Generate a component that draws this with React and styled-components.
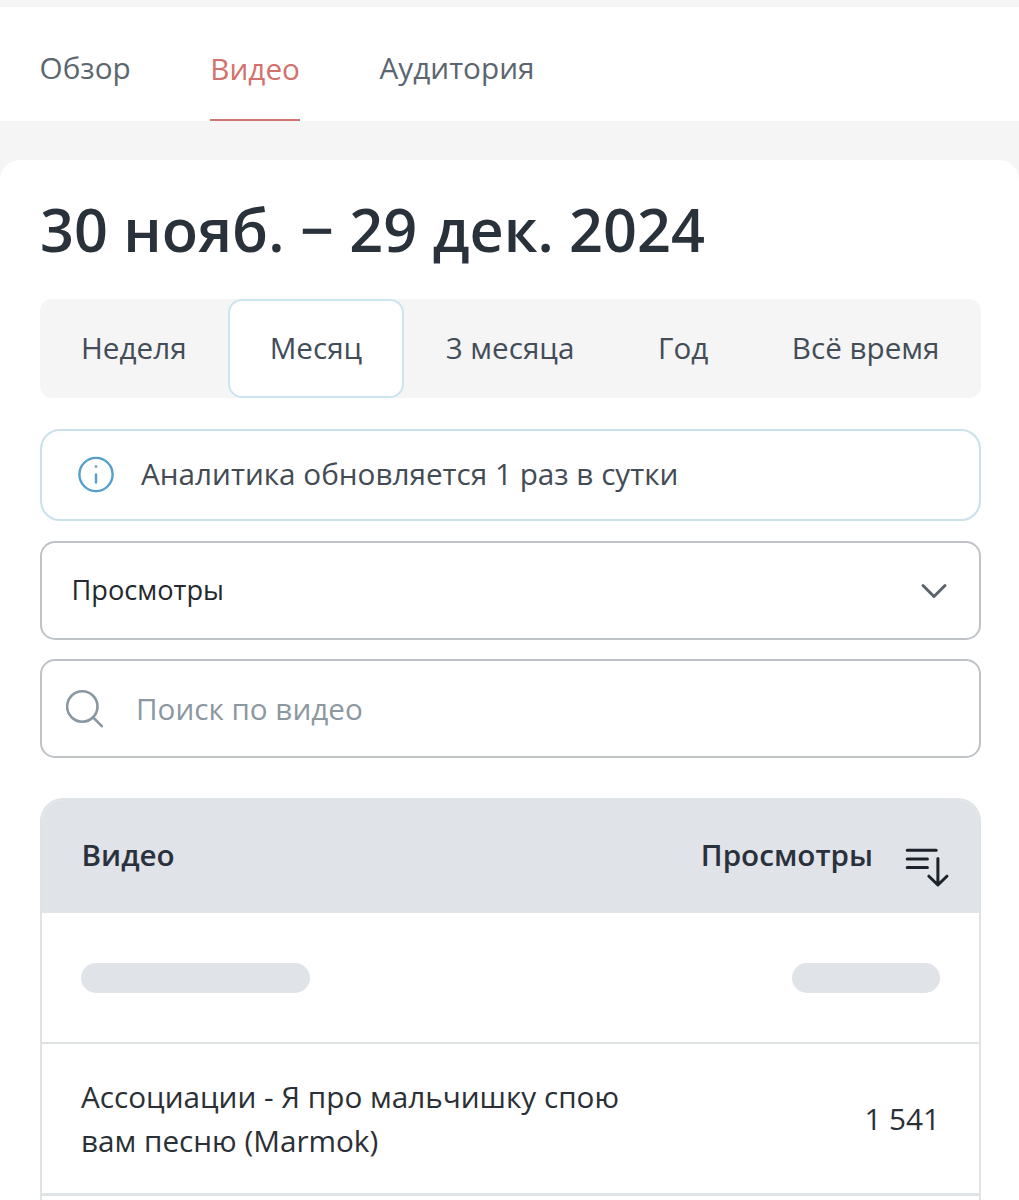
import React, { useState } from "react";
import styled, { createGlobalStyle } from "styled-components";

const GlobalStyle = createGlobalStyle`
  * {
    box-sizing: border-box;
  }

  body {
    margin: 0;
    background: #f5f5f5;
    font-family: "Open Sans", "Noto Sans", sans-serif;
    color: #29323c;
  }

  button,
  input {
    font-family: inherit;
  }
`;

const Page = styled.div`
  display: flex;
  flex-direction: column;
  width: 100%;
  height: 1200px;
  padding-top: 7px;
  overflow: hidden;
`;

const Tabs = styled.nav`
  display: flex;
  flex: none;
  gap: 79.6px;
  height: 114px;
  padding: 0 39.6px;
  background: #ffffff;
`;

const Tab = styled.button`
  padding: ${({ $active }) => ($active ? "12px 0 0" : "10px 0 0")};
  border: none;
  border-bottom: 2px solid ${({ $active }) => ($active ? "#cf7470" : "transparent")};
  background: none;
  color: ${({ $active }) => ($active ? "#d4716d" : "#5b6670")};
  font-size: 29.7px;
  line-height: 40px;
`;

const Card = styled.main`
  flex: 1;
  margin-top: 39px;
  padding: 29px 38px 0 40px;
  border-radius: 20px 20px 0 0;
  background: #ffffff;
`;

const Title = styled.h1`
  margin: 0 0 30px;
  color: #29323b;
  font-size: 59.4px;
  font-weight: 600;
  line-height: 80px;
  white-space: nowrap;
`;

const Periods = styled.div`
  display: flex;
  justify-content: space-between;
  height: 99px;
  margin-bottom: 31px;
  border-radius: 12px;
  background: #f5f5f5;
`;

const Period = styled.button`
  padding: 0 39.5px 2px;
  border: 2px solid ${({ $active }) => ($active ? "#cce4ef" : "transparent")};
  border-radius: 14px;
  background: ${({ $active }) => ($active ? "#ffffff" : "transparent")};
  color: #434d58;
  font-size: 29.65px;
  white-space: nowrap;

  &:first-child {
    padding-left: 39px;
    padding-right: 39px;
  }
`;

const Notice = styled.div`
  display: flex;
  align-items: center;
  gap: 26px;
  height: 92px;
  margin-bottom: 20px;
  padding: 0 36px 1px;
  border: 2px solid #cbe1ea;
  border-radius: 20px;
  color: #434b54;
  font-size: 29.7px;
`;

const Label = styled.span`
  padding-bottom: 2px;
`;

const Field = styled.div`
  display: flex;
  align-items: center;
  height: 99px;
  border: 2px solid #bfc3c7;
  border-radius: 15px;
`;

const Select = styled(Field)`
  justify-content: space-between;
  margin-bottom: 19px;
  padding: 0 31px 0 29.5px;
  color: #25292d;
  font-size: 27.2px;
`;

const Search = styled(Field)`
  gap: 32px;
  margin-bottom: 40px;
  padding: 0 24px;
`;

const SearchInput = styled.input`
  flex: 1;
  padding: 0;
  border: none;
  outline: none;
  background: none;
  font-size: 29.65px;

  &::placeholder {
    color: #8c98a1;
    opacity: 1;
  }
`;

const Table = styled.section`
  height: 460px;
  border: 2px solid #e0e3e5;
  border-top-color: #e0e3e8;
  border-radius: 23px 23px 0 0;
  overflow: hidden;
`;

const TableHead = styled.header`
  display: flex;
  align-items: center;
  height: 113px;
  padding: 0 30px 0 39.5px;
  background: #e0e3e8;
  font-size: 29.65px;
  font-weight: 600;
`;

const HeadLabel = styled.span`
  padding-bottom: 5px;

  &:first-child {
    flex: 1;
  }
`;

const Row = styled.div`
  display: flex;
  align-items: center;
  justify-content: space-between;
  height: ${({ $height }) => $height}px;
  padding: 0 39px;
  border-bottom: ${({ $line }) => $line}px solid #e0e3e5;
  color: #2b3036;
  font-size: 29.7px;
  line-height: 44px;
`;

const Skeleton = styled.div`
  width: ${({ $width }) => $width}px;
  height: 30px;
  border-radius: 15px;
  background: #e0e3e8;
`;

const VideoName = styled.div`
  width: 560px;
`;

const SortButton = styled.button`
  display: flex;
  margin: 21px 0 0 32px;
  padding: 0;
  border: none;
  background: none;
`;

const InfoIcon = () => (
  <svg width="37" height="37" viewBox="0 0 37 37" fill="none" stroke="#539fce">
    <circle cx="18" cy="18.5" r="16.6" strokeWidth="2.4" />
    <path d="M18 18.5v8" strokeWidth="2.4" strokeLinecap="round" />
    <circle cx="18" cy="10.5" r="1.3" fill="#539fce" stroke="none" />
  </svg>
);

const ChevronIcon = () => (
  <svg width="28" height="18" viewBox="0 0 28 18" fill="none">
    <path
      d="M3 3.5 14 14.5 25 3.5"
      stroke="#5b646d"
      strokeWidth="3"
      strokeLinecap="round"
      strokeLinejoin="round"
    />
  </svg>
);

const SearchIcon = () => (
  <svg width="38" height="38" viewBox="0 0 38 38" fill="none" stroke="#8997a0">
    <circle cx="16.3" cy="16.5" r="15.2" strokeWidth="2.6" />
    <path d="m27.1 27.3 8.7 8.9" strokeWidth="2.6" strokeLinecap="round" />
  </svg>
);

const SortIcon = () => (
  <svg
    width="44"
    height="40"
    viewBox="0 0 44 40"
    fill="none"
    stroke="#1c2229"
    strokeWidth="3"
    strokeLinecap="round"
    strokeLinejoin="round"
  >
    <path d="M2.2 3.2h29M2.2 12h20.2M2.2 20.5h20.2" />
    <path d="M32.9 11.5v26M23.9 29.2l9 8.8 9-8.8" />
  </svg>
);

const tabs = ["Обзор", "Видео", "Аудитория"];
const periods = ["Неделя", "Месяц", "3 месяца", "Год", "Всё время"];

export default function App() {
  const [tab, setTab] = useState("Видео");
  const [period, setPeriod] = useState("Месяц");

  return (
    <>
      <GlobalStyle />
      <Page>
        <Tabs>
          {tabs.map((name) => (
            <Tab key={name} $active={name === tab} onClick={() => setTab(name)}>
              {name}
            </Tab>
          ))}
        </Tabs>
        <Card>
          <Title>30 нояб. − 29 дек. 2024</Title>
          <Periods>
            {periods.map((name) => (
              <Period
                key={name}
                $active={name === period}
                onClick={() => setPeriod(name)}
              >
                {name}
              </Period>
            ))}
          </Periods>
          <Notice>
            <InfoIcon />
            <Label>Аналитика обновляется 1 раз в сутки</Label>
          </Notice>
          <Select>
            <Label>Просмотры</Label>
            <ChevronIcon />
          </Select>
          <Search>
            <SearchIcon />
            <SearchInput placeholder="Поиск по видео" />
          </Search>
          <Table>
            <TableHead>
              <HeadLabel>Видео</HeadLabel>
              <HeadLabel>Просмотры</HeadLabel>
              <SortButton>
                <SortIcon />
              </SortButton>
            </TableHead>
            <Row $height={131} $line={2}>
              <Skeleton $width={229} />
              <Skeleton $width={148} />
            </Row>
            <Row $height={152} $line={3}>
              <VideoName>Ассоциации - Я про мальчишку спою вам песню (Marmok)</VideoName>
              <span>1 541</span>
            </Row>
          </Table>
        </Card>
      </Page>
    </>
  );
}
